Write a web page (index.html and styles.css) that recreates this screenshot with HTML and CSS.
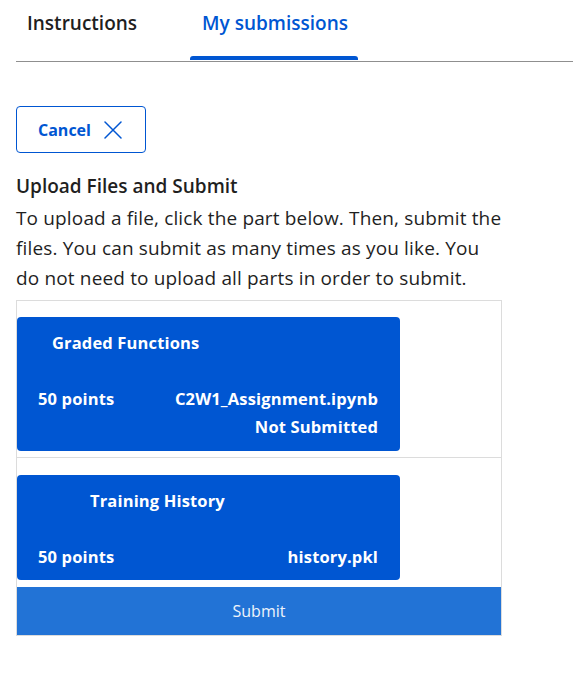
FILE: index.html
```html
<!DOCTYPE html>
<html lang="en">
<head>
<meta charset="utf-8">
<title>My submissions</title>
<link rel="stylesheet" href="styles.css">
</head>
<body>
<div class="page">
  <nav class="tabs">
    <div class="tab">Instructions</div>
    <div class="tab tab-active">My submissions</div>
  </nav>

  <button class="cancel-btn" type="button">
    <span>Cancel</span>
    <svg class="cancel-icon" width="18" height="18" viewBox="0 0 18 18" aria-hidden="true">
      <path d="M1 1 L17 17 M17 1 L1 17" stroke="#0056d2" stroke-width="1.5" fill="none" stroke-linecap="round"/>
    </svg>
  </button>

  <div class="content">
    <h2 class="heading">Upload Files and Submit</h2>
    <p class="desc">To upload a file, click the part below. Then, submit the files. You can submit as many times as you like. You do not need to upload all parts in order to submit.</p>

    <div class="parts">
      <div class="part part-first">
        <div class="card">
          <div class="card-title title-a">Graded Functions</div>
          <div class="card-row">
            <span>50 points</span>
            <div class="card-file">
              <span>C2W1_Assignment.ipynb</span>
              <span>Not Submitted</span>
            </div>
          </div>
        </div>
      </div>
      <div class="part part-second">
        <div class="card card-short">
          <div class="card-title title-b">Training History</div>
          <div class="card-row">
            <span>50 points</span>
            <div class="card-file">
              <span>history.pkl</span>
            </div>
          </div>
        </div>
      </div>
      <button class="submit-btn" type="button">Submit</button>
    </div>
  </div>
</div>
</body>
</html>
```

FILE: styles.css
```css
* { box-sizing: border-box; }

html, body {
  margin: 0;
  padding: 0;
  background: #ffffff;
}

body {
  font-family: "Open Sans", "Noto Sans", sans-serif;
  color: #1f1f1f;
}

.page {
  padding-left: 16px;
}

.tabs {
  display: flex;
  gap: 42px;
  height: 62px;
  border-bottom: 1px solid #8f8f8f;
}

.tab {
  position: relative;
  padding: 10px 11px 0 11px;
  font-size: 19px;
  line-height: 26px;
  font-weight: 600;
  color: #1f1f1f;
}

.tab-active {
  color: #0056d2;
  padding: 10px 10px 0 12px;
}

.tab-active::after {
  content: "";
  position: absolute;
  left: 0;
  right: 0;
  bottom: 1px;
  height: 4px;
  background: #0056d2;
  border-radius: 3px 3px 0 0;
}

.cancel-btn {
  margin-top: 44px;
  display: flex;
  align-items: center;
  gap: 13px;
  width: 130px;
  height: 47px;
  padding: 0 0 0 21px;
  border: 1px solid #0056d2;
  border-radius: 4px;
  background: #ffffff;
  color: #0056d2;
  font-family: inherit;
  font-size: 16px;
  font-weight: 700;
  cursor: pointer;
}

.cancel-icon {
  display: block;
}

.content {
  width: 486px;
}

.heading {
  margin: 18px 0 2px 0;
  font-size: 19px;
  line-height: 30px;
  font-weight: 600;
  color: #1f1f1f;
}

.desc {
  margin: 0 0 7px 0;
  font-size: 19px;
  line-height: 30px;
  letter-spacing: 0.15px;
  color: #1f1f1f;
}

.parts {
  border: 1px solid #dcdcdc;
  display: flex;
  flex-direction: column;
}

.part {
  padding-right: 101px;
}

.part-first {
  padding-top: 16px;
  padding-bottom: 6px;
  border-bottom: 1px solid #dcdcdc;
}

.part-second {
  padding-top: 17px;
  padding-bottom: 7px;
}

.card {
  background: #0056d2;
  border-radius: 4px;
  color: #ffffff;
  padding: 14px 22px 10px 21px;
  font-size: 16.5px;
  letter-spacing: 0.15px;
  font-weight: 700;
}

.card-short {
  padding-bottom: 9px;
}

.card-title {
  line-height: 24px;
  margin-bottom: 30px;
}

.title-a { padding-left: 14px; }
.title-b { padding-left: 52px; }

.card-row {
  display: flex;
  justify-content: space-between;
  line-height: 28px;
}

.card-file {
  display: flex;
  flex-direction: column;
  align-items: flex-end;
}

.submit-btn {
  display: block;
  width: 100%;
  height: 48px;
  border: none;
  background: #2273d6;
  color: #eef3fb;
  font-family: inherit;
  font-size: 16px;
  font-weight: 400;
  cursor: pointer;
}
```
